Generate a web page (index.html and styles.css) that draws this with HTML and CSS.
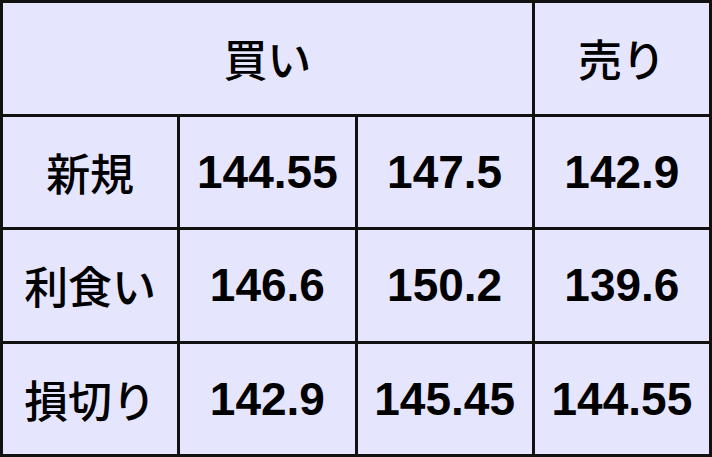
FILE: index.html
```html
<!DOCTYPE html>
<html lang="ja">
<head>
<meta charset="utf-8">
<link rel="stylesheet" href="styles.css">
</head>
<body>
<div class="table">
  <div class="cell head span3">買い</div>
  <div class="cell head">売り</div>
  <div class="cell head">新規</div>
  <div class="cell num">144.55</div>
  <div class="cell num">147.5</div>
  <div class="cell num">142.9</div>
  <div class="cell head">利食い</div>
  <div class="cell num">146.6</div>
  <div class="cell num">150.2</div>
  <div class="cell num">139.6</div>
  <div class="cell head">損切り</div>
  <div class="cell num">142.9</div>
  <div class="cell num">145.45</div>
  <div class="cell num">144.55</div>
</div>
</body>
</html>
```
FILE: styles.css
```css
html, body {
  margin: 0;
  padding: 0;
  background: #ffffff;
}
.table {
  width: 712px;
  height: 457px;
  box-sizing: border-box;
  display: grid;
  grid-template-columns: repeat(4, 1fr);
  grid-template-rows: repeat(4, 1fr);
  gap: 3px;
  padding: 3px;
  background: #111111;
}
.cell {
  background: #e5e5fd;
  display: flex;
  align-items: center;
  justify-content: center;
  color: #000;
  white-space: nowrap;
}
.span3 {
  grid-column: span 3;
}
.head {
  font-family: "Noto Sans CJK JP", sans-serif;
  font-weight: 500;
  font-size: 44px;
}
.num {
  font-family: "Liberation Sans", Arial, sans-serif;
  font-weight: 700;
  font-size: 46px;
}
```
